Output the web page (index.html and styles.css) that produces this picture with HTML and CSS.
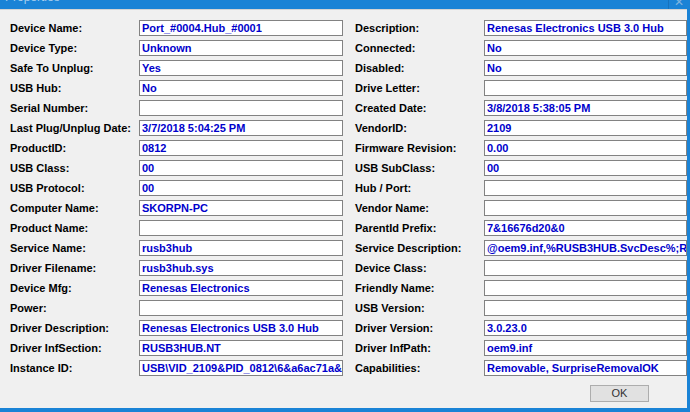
FILE: index.html
```html
<!DOCTYPE html>
<html>
<head>
<meta charset="utf-8">
<title>Properties</title>
<link rel="stylesheet" href="styles.css">
</head>
<body>
<div class="window">
  <div class="titlebar">
    <span class="title">Properties</span>
    <span class="close">✕</span>
  </div>
  <div class="content">
    <div class="grid">
      <div class="label">Device Name:</div><div class="box">Port_#0004.Hub_#0001</div>
      <div class="label">Description:</div><div class="box">Renesas Electronics USB 3.0 Hub</div>

      <div class="label">Device Type:</div><div class="box">Unknown</div>
      <div class="label">Connected:</div><div class="box">No</div>

      <div class="label">Safe To Unplug:</div><div class="box">Yes</div>
      <div class="label">Disabled:</div><div class="box">No</div>

      <div class="label">USB Hub:</div><div class="box">No</div>
      <div class="label">Drive Letter:</div><div class="box"></div>

      <div class="label">Serial Number:</div><div class="box"></div>
      <div class="label">Created Date:</div><div class="box">3/8/2018 5:38:05 PM</div>

      <div class="label">Last Plug/Unplug Date:</div><div class="box">3/7/2018 5:04:25 PM</div>
      <div class="label">VendorID:</div><div class="box">2109</div>

      <div class="label">ProductID:</div><div class="box">0812</div>
      <div class="label">Firmware Revision:</div><div class="box">0.00</div>

      <div class="label">USB Class:</div><div class="box">00</div>
      <div class="label">USB SubClass:</div><div class="box">00</div>

      <div class="label">USB Protocol:</div><div class="box">00</div>
      <div class="label">Hub / Port:</div><div class="box"></div>

      <div class="label">Computer Name:</div><div class="box">SKORPN-PC</div>
      <div class="label">Vendor Name:</div><div class="box"></div>

      <div class="label">Product Name:</div><div class="box"></div>
      <div class="label">ParentId Prefix:</div><div class="box">7&amp;16676d20&amp;0</div>

      <div class="label">Service Name:</div><div class="box">rusb3hub</div>
      <div class="label">Service Description:</div><div class="box">@oem9.inf,%RUSB3HUB.SvcDesc%;Renesas USB 3.0 Hub Driver</div>

      <div class="label">Driver Filename:</div><div class="box">rusb3hub.sys</div>
      <div class="label">Device Class:</div><div class="box"></div>

      <div class="label">Device Mfg:</div><div class="box">Renesas Electronics</div>
      <div class="label">Friendly Name:</div><div class="box"></div>

      <div class="label">Power:</div><div class="box"></div>
      <div class="label">USB Version:</div><div class="box"></div>

      <div class="label">Driver Description:</div><div class="box">Renesas Electronics USB 3.0 Hub</div>
      <div class="label">Driver Version:</div><div class="box">3.0.23.0</div>

      <div class="label">Driver InfSection:</div><div class="box">RUSB3HUB.NT</div>
      <div class="label">Driver InfPath:</div><div class="box">oem9.inf</div>

      <div class="label">Instance ID:</div><div class="box">USB\VID_2109&amp;PID_0812\6&amp;a6ac71a&amp;0&amp;4</div>
      <div class="label">Capabilities:</div><div class="box">Removable, SurpriseRemovalOK</div>
    </div>
    <div class="footer">
      <button class="ok">OK</button>
    </div>
  </div>
</div>
</body>
</html>
```

FILE: styles.css
```css
html, body {
  margin: 0;
  padding: 0;
}
body {
  width: 690px;
  height: 412px;
  overflow: hidden;
  background: #1a83d6;
  font-family: "Liberation Sans", Arial, sans-serif;
}
.window {
  width: 690px;
  height: 412px;
  display: flex;
  flex-direction: column;
}
.titlebar {
  height: 9px;
  flex: none;
  display: flex;
  align-items: flex-end;
  overflow: hidden;
  background: #1a83d6;
  position: relative;
}
.title {
  color: #a9d0f0;
  font-size: 12px;
  line-height: 12px;
  margin-left: 5px;
  margin-bottom: 6px;
}
.close {
  position: absolute;
  left: 668px;
  top: 0;
  width: 19px;
  height: 9px;
  border-left: 1px solid #1672bd;
  color: #7fb3df;
  font-size: 12px;
  line-height: 4px;
  text-align: center;
  overflow: hidden;
}
.content {
  flex: none;
  width: 687px;
  height: 399px;
  background: #f0f0f0;
  border-top: 1px solid #d4d4d4;
  padding-top: 10px;
  box-sizing: border-box;
  overflow: hidden;
  display: flex;
  flex-direction: column;
}
.grid {
  display: grid;
  grid-template-columns: 117px 204px 117px 203px;
  grid-auto-rows: 16px;
  column-gap: 12px;
  row-gap: 4px;
  padding-left: 10px;
}
.label {
  font-size: 11px;
  font-weight: bold;
  color: #000;
  line-height: 16px;
  white-space: nowrap;
}
.box {
  background: #fff;
  border: 1px solid #828282;
  box-sizing: border-box;
  padding-left: 2px;
  font-size: 11px;
  font-weight: bold;
  color: #0000cc;
  line-height: 14px;
  white-space: nowrap;
  overflow: hidden;
}
.footer {
  display: flex;
  justify-content: flex-end;
  padding-right: 38px;
  margin-top: 9px;
}
.ok {
  width: 59px;
  height: 17px;
  margin: 0;
  padding: 0;
  background: #e1e1e1;
  border: 1px solid #adadad;
  font-family: "Liberation Sans", Arial, sans-serif;
  font-size: 11px;
  color: #333;
  line-height: 15px;
}
```
